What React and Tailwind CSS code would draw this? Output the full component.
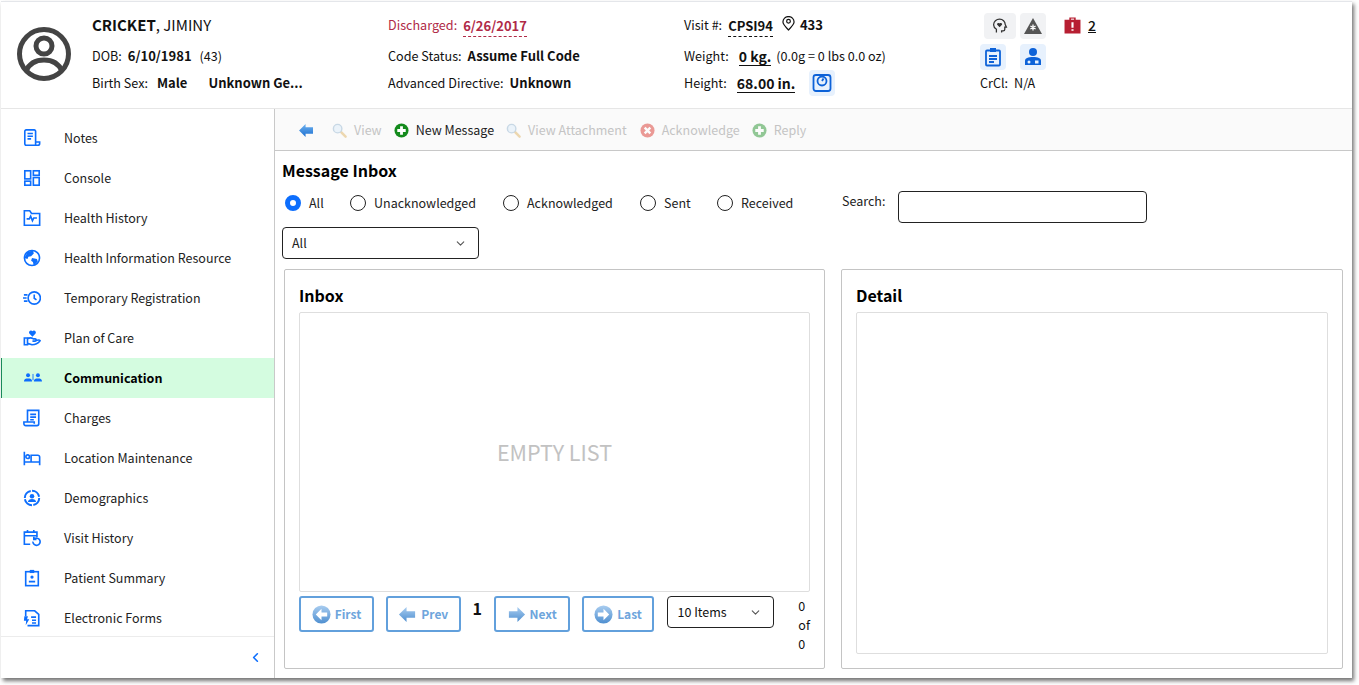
import React from 'react';
import { ChevronDown, ChevronLeft } from 'lucide-react';

const Ico = ({ children, className = 'w-5 h-5', sw = 1.8 }) => (
  <svg viewBox="0 0 20 20" className={className} fill="none" stroke="currentColor" strokeWidth={sw}>
    {children}
  </svg>
);

// sidebar icons
const navItems = [
  { label: 'Notes', icon: <><path d="M3.500 18a1.500 1.500 0 0 1-1.500-1.500V2.500A1.500 1.500 0 0 1 3.500 1h9A1.500 1.500 0 0 1 14 2.500V18zM14 14.500h4.500V16a2 2 0 0 1-2 2H14" /><path d="M5 5h6M5 8h6M5 11h4" /></> },
  { label: 'Console', icon: <><rect x="2" y="2" width="6.500" height="9" /><rect x="11.500" y="2" width="6.500" height="5" /><rect x="2" y="13.500" width="6.500" height="4.500" /><rect x="11.500" y="9.500" width="6.500" height="8.500" /></> },
  { label: 'Health History', icon: <><path d="M1.500 18V2h6l2 3h9v13z" /><path d="M4 11h3l1.500-3 2 5 1.500-3h3.500" /></> },
  { label: 'Health Information Resource', icon: <><circle cx="10" cy="10" r="8.400" /><path fill="currentColor" stroke="none" d="M5 3.500l6-2 1 3.500-3 3-3 .5-1 2.500-3.500-1zM10 10l5.500 1 1 3-4.500 4.500-1-4-2-1.500z" /></> },
  { label: 'Temporary Registration', icon: <><circle cx="12.500" cy="10" r="6.800" /><path d="M12.500 6v4.300l2.500 1.700M1 6.500h4M0 10h4M1 13.500h4" /></> },
  { label: 'Plan of Care', icon: <><path d="M1.500 10h3.500v7.500H1.500zM5 11c3-2 5-1 6.500 0h2c1.500 0 1.500 2.500 0 2.500h-3M5 16l5 1.500c3 0 7-2 9-4.500-1-1.500-3.500-.5-5.500.5" /><path fill="currentColor" stroke="none" d="M10.500 8.500L7 5C5.500 2.500 9 .500 10.500 2.500 12 .500 15.500 2.500 14 5z" /></> },
  { label: 'Communication', active: true, icon: <><circle cx="4.500" cy="7" r="2.200" fill="currentColor" stroke="none" /><path fill="currentColor" stroke="none" d="M0 14c0-3 2-3.500 4.500-3.500S9 11 9 14zM11 14c0-3 2-3.500 4.500-3.500S20 11 20 14z" /><circle cx="15.500" cy="7" r="2.200" fill="currentColor" stroke="none" /><path strokeWidth="1" d="M10 5.500v7" /></> },
  { label: 'Charges', icon: <><path d="M5 14.500V1.500h12.500v15a2 2 0 0 1-2 2H3a2 2 0 0 1-2-2v-2h11.500v2" /><path d="M8 6h6.500M8 9h6.500M8 12h4" /></> },
  { label: 'Location Maintenance', icon: <><path d="M1.500 3v15M1.500 14.500h17M18.500 18v-9a2 2 0 0 0-2-2H9v7" /><circle cx="5.200" cy="8.500" r="2" /></> },
  { label: 'Demographics', icon: <><circle cx="10" cy="10" r="8" strokeWidth="2.200" strokeDasharray="11 1.500" /><circle cx="10" cy="8" r="2.500" fill="currentColor" stroke="none" /><path fill="currentColor" stroke="none" d="M5.500 14.500c0-2.500 2-3.500 4.500-3.500s4.500 1 4.500 3.500z" /></> },
  { label: 'Visit History', icon: <><path d="M8 17H1.500V3.500h14V9M1.500 7.500h14M5 1v3.500M12 1v3.500" /><path d="M11 14a4 4 0 1 0 1.500-3M12 8.500v3h3" /></> },
  { label: 'Patient Summary', icon: <><rect x="3" y="3" width="14" height="15.500" /><path fill="currentColor" stroke="none" d="M7.500 1h5v3.500h-5z" /><circle cx="10" cy="9" r="1.800" fill="currentColor" stroke="none" /><path strokeWidth="2" d="M6.500 14h7" /></> },
  { label: 'Electronic Forms', icon: <><path d="M3 8V2h10l4.500 4v12.500H5" /><path d="M9 9h5.500M10 12.500h4.500M10 15.500h4.500" /><path fill="currentColor" stroke="none" d="M5.500 8H1.500L1 13h2.500L3 18l4-6.500H4.500z" /></> },
];

const ToolIcon = ({ kind, muted }) => {
  const cls = `w-[15px] h-[15px] ${muted ? 'opacity-45' : ''}`;
  if (kind === 'search') {
    return (
      <svg viewBox="0 0 16 16" className="w-[15px] h-[15px] opacity-40">
        <path d="M9.500 9.500l5 5" stroke="#d9a441" strokeWidth="2.600" strokeLinecap="round" />
        <circle cx="6" cy="6" r="4.500" fill="#d6ebfa" stroke="#7fa6c8" strokeWidth="1.500" />
      </svg>
    );
  }
  if (kind === 'plus') {
    return (
      <svg viewBox="0 0 16 16" className={cls}>
        <circle cx="8" cy="8" r="7.500" fill="#138a1c" />
        <path d="M8 3.500v9M3.500 8h9" stroke="#fff" strokeWidth="3" />
      </svg>
    );
  }
  return (
    <svg viewBox="0 0 16 16" className={cls}>
      <circle cx="8" cy="8" r="7.500" fill="#d8261c" />
      <path d="M5 5l6 6M11 5l-6 6" stroke="#fff" strokeWidth="2.600" />
    </svg>
  );
};

const PagerIcon = ({ dir, round }) => (
  <svg viewBox="0 0 20 20" className="w-[19px] h-[19px]">
    <defs>
      <linearGradient id="pagerFill" x1="0" y1="0" x2="0" y2="1">
        <stop offset="0" stopColor="#a9cdf0" />
        <stop offset="1" stopColor="#4f8fd0" />
      </linearGradient>
    </defs>
    {round && <circle cx="10" cy="10" r="9.500" fill="url(#pagerFill)" />}
    {round ? (
      <path d={dir === 'left' ? 'M10 4l-6 6 6 6v-4h6V8h-6z' : 'M10 4l6 6-6 6v-4H4V8h6z'} fill="#fff" />
    ) : (
      <path d={dir === 'left' ? 'M9 2l-8 8 8 8v-4.500h9v-7H9z' : 'M11 2l8 8-8 8v-4.500H2v-7h9z'} fill="url(#pagerFill)" />
    )}
  </svg>
);

const PagerButton = ({ label, dir, round, width }) => (
  <button className={`${width} h-[36px] flex items-center justify-center gap-[4px] border-2 border-[#62a0dc] rounded-[3px] bg-white text-[12px] font-semibold text-[#6ea5dc]`}>
    <PagerIcon dir={dir} round={round} />
    <span>{label}</span>
  </button>
);

const Radio = ({ label, checked, width }) => (
  <label className={`${width} flex items-center`}>
    {checked ? (
      <span className="w-4 h-4 rounded-full border-[5px] border-[#0d6efd] bg-white mr-[8px]" />
    ) : (
      <span className="w-4 h-4 rounded-full border border-[#222] bg-white mr-[8px]" />
    )}
    <span>{label}</span>
  </label>
);

const Tile = ({ children, tone = 'blue', className = 'w-[26px]' }) => (
  <div className={`h-[26px] rounded-[4px] flex items-center justify-center ${tone === 'blue' ? 'bg-[#e7f1fd] text-[#0d62d8]' : 'bg-[#f1f2f4] text-[#333]'} ${className}`}>
    {children}
  </div>
);

const Row = ({ className = '', children }) => (
  <div className={`flex items-center whitespace-nowrap ${className}`}>{children}</div>
);

const Val = ({ className = '', children }) => (
  <b className={`font-semibold text-[13px] ${className}`}>{children}</b>
);

function Header() {
  return (
    <header className="h-[107px] flex border-b border-[#e6e6e6] text-[12.6px] leading-[20px] text-[#111]">
      <div className="w-[91px] flex items-center pl-[16px] pb-[2px]">
        <svg viewBox="0 0 54 54" className="w-[54px] h-[54px] text-[#444]" fill="none" stroke="currentColor" strokeWidth="5">
          <circle cx="27" cy="27" r="24.500" />
          <circle cx="27" cy="19" r="8" />
          <path d="M9 44c4-9 11-11 18-11s14 2 18 11" />
        </svg>
      </div>
      <div className="w-[296px] pt-[13px]">
        <Row className="h-[20px] text-[15px]"><b className="font-semibold">CRICKET</b>, JIMINY</Row>
        <Row className="h-[20px] mt-[11px]">DOB:<Val className="ml-[6px]">6/10/1981</Val><span className="ml-[8px]">(43)</span></Row>
        <Row className="h-[20px] mt-[7px]">Birth Sex:<Val className="ml-[9px]">Male</Val><Val className="ml-[21px]">Unknown Ge...</Val></Row>
      </div>
      <div className="w-[296px] pt-[13px]">
        <Row className="h-[20px] text-[#b02a47]">Discharged:<Val className="ml-[6px] border-b border-dashed border-[#b02a47] leading-[21px] mt-[2px]">6/26/2017</Val></Row>
        <Row className="h-[20px] mt-[11px]">Code Status:<Val className="ml-[6px]">Assume Full Code</Val></Row>
        <Row className="h-[20px] mt-[7px]">Advanced Directive:<Val className="ml-[6px]">Unknown</Val></Row>
      </div>
      <div className="w-[296px] pt-[13px]">
        <Row className="h-[20px]">
          Visit #:
          <Val className="ml-[6px] border-b border-dashed border-[#111] leading-[21px] mt-[2px]">CPSI94</Val>
          <svg viewBox="0 0 14 16" className="w-[13px] h-[15px] ml-[9px] mb-[3px]" fill="none" stroke="#111" strokeWidth="1.300">
            <path d="M7 15C3 11 1 8.500 1 6.500a6 6 0 0 1 12 0C13 8.500 11 11 7 15z" />
            <circle cx="7" cy="5.500" r="2" />
          </svg>
          <Val className="ml-[5px]">433</Val>
        </Row>
        <Row className="h-[20px] mt-[11px]">
          Weight:
          <b className="font-semibold text-[14px] ml-[10px] border-b border-[#111] leading-[18px]">0 kg.</b>
          <span className="ml-[5px]">(0.0g = 0 lbs 0.0 oz)</span>
        </Row>
        <Row className="h-[20px] mt-[7px]">
          <span>Height:</span>
          <b className="font-semibold text-[14px] ml-[10px] border-b border-[#111] leading-[18px]">68.00 in.</b>
          <Tile className="w-[26px] ml-[14px]">
            <Ico className="w-[20px] h-[20px]">
              <path d="M4 2h12a2.500 2.500 0 0 1 2.500 2.500v11A2.500 2.500 0 0 1 16 18H4a2.500 2.500 0 0 1-2.500-2.500v-11A2.500 2.500 0 0 1 4 2z" />
              <circle cx="10" cy="8" r="4.500" />
              <path d="M10 8l1.500-2.500" />
            </Ico>
          </Tile>
        </Row>
      </div>
      <div className="flex-1 pt-[11px]">
        <div className="flex items-center ml-[4px]">
          <Tile tone="gray" className="w-[32px]">
            <Ico className="w-[16px] h-[16px]" sw={1.6}>
              <path d="M5.500 18v-4C3 12.500 2 10.500 2 8.500 2 4.500 5.500 1.500 9.500 1.500s7 3 7 6.500l1.500 3.500h-2V14a2 2 0 0 1-2 2h-2v2" />
              <path fill="currentColor" stroke="none" d="M9.500 11.500L6.500 8.500c-1-1.500 1.500-3 3-1.500 1.500-1.500 4 0 3 1.500z" />
            </Ico>
          </Tile>
          <Tile tone="gray" className="w-[26px] ml-[4px]">
            <svg viewBox="0 0 20 20" className="w-[20px] h-[20px]">
              <path d="M10 2l9 16H1z" fill="#555" />
              <path d="M10 8.500v6M7.400 10l5.200 3M12.600 10l-5.200 3" stroke="#fff" strokeWidth="1.300" />
            </svg>
          </Tile>
          <svg viewBox="0 0 16 16" className="w-[17px] h-[18px] ml-[18px] mb-[2px]">
            <path d="M5 3V1h6v2h4.500v13H.5V3z" fill="#b71f32" />
            <path d="M6.500 2h3v1h-3z" fill="#fff" />
            <path d="M8 5.500v5M8 12v1.500" stroke="#fff" strokeWidth="2" />
          </svg>
          <span className="ml-[7px] mb-[2px] text-[14px] font-medium underline">2</span>
        </div>
        <div className="flex items-center mt-[5px]">
          <Tile>
            <Ico className="w-[20px] h-[20px]">
              <rect x="3" y="3.500" width="14" height="15" rx="1" />
              <path fill="currentColor" stroke="none" d="M7 1h6v4H7z" />
              <path d="M6 9h8M6 12h8M6 15h5" />
            </Ico>
          </Tile>
          <Tile className="w-[26px] ml-[14px]">
            <svg viewBox="0 0 20 20" className="w-[20px] h-[20px]" fill="currentColor">
              <circle cx="10" cy="5" r="4" />
              <path d="M2 18v-4c0-3 3-4 8-4s8 1 8 4v4z" />
              <circle cx="6" cy="15" r="1.500" fill="#e7f1fd" />
              <rect x="12" y="13.500" width="3.500" height="3" fill="#e7f1fd" />
            </svg>
          </Tile>
        </div>
        <Row className="mt-[3px] h-[20px]">CrCl:<span className="ml-[6px]">N/A</span></Row>
      </div>
    </header>
  );
}

function Sidebar() {
  return (
    <aside className="w-[274px] flex-none border-r border-[#c9c9c9] flex flex-col text-[12.5px] text-[#222]">
      <nav className="pt-[9px]">
        {navItems.map((item) => (
          <div
            key={item.label}
            className={`h-[40px] flex items-center ${item.active ? 'bg-[#d4fce0] border-l border-[#1a8a5a] font-semibold text-black' : ''}`}
          >
            <span className={`${item.active ? 'w-[62px]' : 'w-[63px]'} flex justify-center pr-[1px] text-[#0d6efd]`}>
              <Ico className="w-[18px] h-[18px]">{item.icon}</Ico>
            </span>
            <span>{item.label}</span>
          </div>
        ))}
      </nav>
      <div className="flex-1 border-t border-[#ececec] mt-[-2px] flex items-center justify-end pr-[11px] text-[#0d6efd]">
        <ChevronLeft className="w-[15px] h-[15px]" strokeWidth={2.500} />
      </div>
    </aside>
  );
}

function Toolbar() {
  return (
    <div className="h-[42px] flex-none flex items-center bg-[#fafafa] border-b border-[#c8c8c8] text-[12.5px] pl-[24px] pt-[2px] text-[#c4c4c4]">
      <svg viewBox="0 0 16 14" className="w-[15px] h-[13px] mr-[18px]">
        <defs>
          <linearGradient id="backFill" x1="0" y1="0" x2="0" y2="1">
            <stop offset="0" stopColor="#6fb2f0" />
            <stop offset="1" stopColor="#1b6fd0" />
          </linearGradient>
        </defs>
        <path d="M7 0L0 7l7 7v-3.500h8v-7H7z" fill="url(#backFill)" />
      </svg>
      <ToolIcon kind="search" />
      <span className="ml-[7px] mr-[12px]">View</span>
      <ToolIcon kind="plus" />
      <span className="ml-[7px] mr-[12px] text-[#222]">New Message</span>
      <ToolIcon kind="search" />
      <span className="ml-[7px] mr-[13px]">View Attachment</span>
      <ToolIcon kind="x" muted />
      <span className="ml-[7px] mr-[12px]">Acknowledge</span>
      <ToolIcon kind="plus" muted />
      <span className="ml-[7px]">Reply</span>
    </div>
  );
}

function Filters() {
  return (
    <div className="pl-[7px] text-[12.5px] text-[#222]">
      <h1 className="text-[16px] leading-[24px] font-semibold text-black mt-[7px]">Message Inbox</h1>
      <div className="flex items-center h-[36px] mt-[3px] pl-[3px]">
        <Radio label="All" checked width="w-[65px]" />
        <Radio label="Unacknowledged" width="w-[153px]" />
        <Radio label="Acknowledged" width="w-[137px]" />
        <Radio label="Sent" width="w-[77px]" />
        <Radio label="Received" width="w-[125px]" />
        <span className="mb-[4px]">Search:</span>
        <div className="w-[249px] h-[32px] ml-[13px] mt-[8px] border border-[#222] rounded-[4px] bg-white" />
      </div>
      <div className="w-[197px] h-[32px] mt-[6px] flex items-center justify-between border border-[#222] rounded-[4px] pl-[9px] pr-[11px]">
        <span>All</span>
        <ChevronDown className="w-[13px] h-[13px] text-[#555]" />
      </div>
    </div>
  );
}

function Panels() {
  return (
    <div className="flex-1 flex pl-[9px] pt-[10px] pb-[9px] pr-[8px] gap-[16px] min-h-0">
      <section className="w-[541px] border border-[#c4c4c4] rounded-[2px] px-[14px] flex flex-col">
        <h2 className="text-[16px] leading-[22px] font-semibold text-black mt-[14px] mb-[6px]">Inbox</h2>
        <div className="h-[280px] border border-[#dedede] rounded-[2px] flex items-center justify-center text-[21.5px] text-[#c2c2c2]">
          EMPTY LIST
        </div>
        <div className="flex items-start mt-[4px] text-[12.5px] text-[#111]">
          <PagerButton label="First" dir="left" round width="w-[75px]" />
          <span className="w-[12px]" />
          <PagerButton label="Prev" dir="left" width="w-[75px]" />
          <b className="w-[33px] text-center font-semibold text-[16px] leading-[24px]">1</b>
          <PagerButton label="Next" dir="right" width="w-[76px]" />
          <span className="w-[12px]" />
          <PagerButton label="Last" dir="right" round width="w-[73px]" />
          <div className="w-[107px] h-[32px] ml-[13px] flex items-center justify-between border border-[#222] rounded-[4px] pl-[9px] pr-[11px]">
            <span>10 Items</span>
            <ChevronDown className="w-[13px] h-[13px] text-[#555]" />
          </div>
          <div className="ml-[24px] leading-[19px]">
            0<br />of<br />0
          </div>
        </div>
      </section>
      <section className="w-[502px] border border-[#c4c4c4] rounded-[2px] px-[14px] flex flex-col">
        <h2 className="text-[16px] leading-[22px] font-semibold text-black mt-[14px] mb-[6px]">Detail</h2>
        <div className="h-[342px] border border-[#dedede] rounded-[2px]" />
      </section>
    </div>
  );
}

export default function App() {
  return (
    <div className="w-[1359px] h-[685px] bg-white overflow-hidden pl-px" style={{ fontFamily: '"Noto Sans CJK SC", "Noto Sans", sans-serif' }}>
      <div className="w-[1351px] h-[677px] mt-[1px] border-t border-[#e4e6ea] flex flex-col bg-white shadow-[2px_3px_4px_rgba(0,0,0,0.55)]">
        <Header />
        <div className="flex-1 flex min-h-0">
          <Sidebar />
          <main className="flex-1 flex flex-col min-w-0">
            <Toolbar />
            <Filters />
            <Panels />
          </main>
        </div>
      </div>
    </div>
  );
}
